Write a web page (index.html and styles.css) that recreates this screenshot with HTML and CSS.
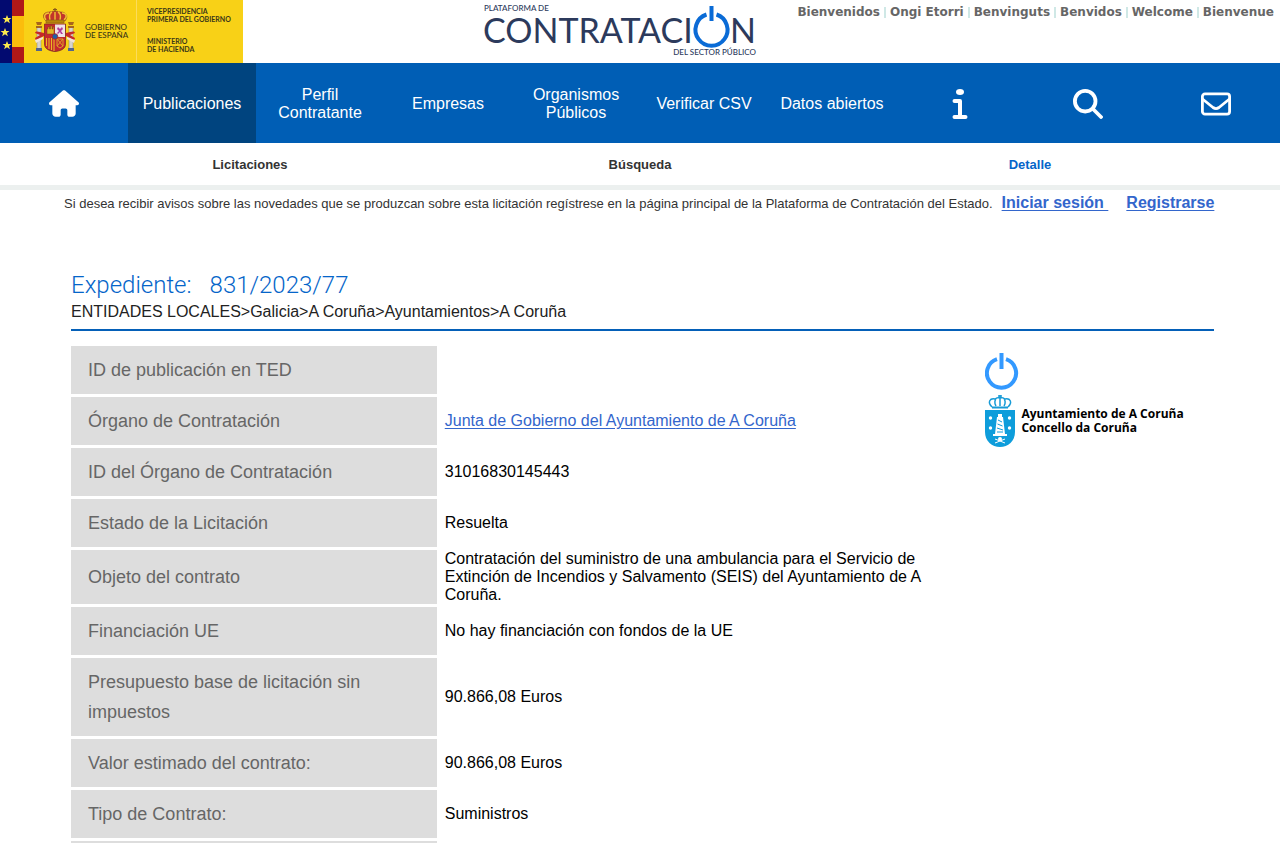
FILE: index.html
```html
<!DOCTYPE html>
<html lang="es">
<head>
<meta charset="utf-8">
<title>Plataforma de Contratación del Sector Público</title>
<link rel="stylesheet" href="styles.css">
</head>
<body>
<header class="top">
  <a class="gov" href="#" aria-label="Gobierno de España">
    <svg width="243" height="63" viewBox="0 0 243 63">
      <rect width="243" height="63" fill="#f8d117"/>
      <rect width="12" height="63" fill="#020a70"/>
      <rect x="12" width="12" height="63" fill="#b01818"/>
      <rect x="12" y="16" width="12" height="31" fill="#fbbd0c"/>
      <path d="M136.500 0v63" stroke="#fbdc5c"/>
      <g fill="#fbe94e">
        <path id="star" d="M7 15l1.200 3h3.300l-2.600 2 1 3.200L7 21.300l-2.900 1.900 1-3.200-2.600-2h3.300z"/>
        <use href="#star" x="-2" y="13"/>
        <use href="#star" y="26"/>
      </g>
      <g stroke="#8c5a1a" stroke-width=".6">
        <path d="M46 21c-5-5-2-9 3-9 2 0 3-1 6-1s4 1 6 1c5 0 8 4 4 9z" fill="#c2352b"/>
        <path d="M46 20c-3-4-1-7 3-7M50 20c-1-4 0-7 2-8M55 20v-8M60 20c1-4 0-7-2-8M64 20c4-4 2-7-2-7" fill="none" stroke="#f1c232" stroke-width="1.400"/>
        <path d="M46 20h18v3H46z" fill="#b8860b"/>
        <path d="M55 8v4M53 9.500h4" stroke-width="1.200"/>
      </g>
      <g id="pillar">
        <path d="M37 27h4v22h-4z" fill="#d8d4cc" stroke="#8a8580" stroke-width=".5"/>
        <path d="M36 22h6l-1 3h-4zM36 26h6v2h-6z" fill="#a8641c"/>
        <path d="M36 48h6v3h-6z" fill="#54658c"/>
        <path d="M35 33c1-3 4-1 9 0v3c-4 2-6 3-8 5l-1-3 5-3z" fill="#c62828"/>
        <path d="M35 40l8-3v2l-7 4z" fill="#f1e5d8"/>
      </g>
      <use href="#pillar" transform="translate(110 0) scale(-1 1)"/>
      <path d="M44.500 24h21v20c0 5-5 7-10.500 7.500-5.500-.5-10.500-2.500-10.500-7.500z" fill="#c5282f" stroke="#7b2a22" stroke-width=".8"/>
      <path d="M55 24.500h10V37H55z" fill="#efe3e6"/>
      <path d="M47 34v-5h1v-2h1.500v2h1v-3h1.500v3h1v-2h1v7z" fill="#e4b425" stroke="#7b4a14" stroke-width=".5"/>
      <path d="M58 27l2 2 2-2 1 2-2 2 2 3h-2l-1-2-2 2-1-1 2-2-2-2z" fill="#b0399a"/>
      <path d="M46.500 38v8M49 38v11M51.500 38v12M54 38v13" stroke="#e9b824" stroke-width="1.100"/>
      <path d="M57 39h6v7l-3 2-3-2zM57 39l6 7M63 39l-6 7" fill="none" stroke="#dda325"/>
      <circle cx="55" cy="36.500" r="2.800" fill="#1f5fa8" stroke="#b0281e" stroke-width=".8"/>
      <g class="gov-text">
        <text class="gov-name" x="85" y="30">GOBIERNO</text>
        <text class="gov-name" x="85" y="38">DE ESPAÑA</text>
        <text x="147" y="14">VICEPRESIDENCIA</text>
        <text x="147" y="22">PRIMERA DEL GOBIERNO</text>
        <text x="147" y="44">MINISTERIO</text>
        <text x="147" y="52">DE HACIENDA</text>
      </g>
    </svg>
  </a>
  <a class="brand" href="#" aria-label="Plataforma de Contratación del Sector Público">
    <svg width="274" height="60" viewBox="0 0 274 60">
      <g class="brand-text">
        <text class="brand-small" x="1" y="11">PLATAFORMA DE</text>
        <text class="brand-big" x="0" y="43">CONTRATACI</text>
        <text class="brand-big" x="247" y="43">N</text>
        <text class="brand-small" x="273" y="55" text-anchor="end">DEL SECTOR PÚBLICO</text>
      </g>
      <path d="M223.500 14.500a16 16 0 1 0 10 0M228.500 6v15" fill="none" stroke="#0a6bd6" stroke-width="4"/>
    </svg>
  </a>
  <ul class="langs">
    <li><a href="#">Bienvenidos</a></li>
    <li><a href="#">Ongi Etorri</a></li>
    <li><a href="#">Benvinguts</a></li>
    <li><a href="#">Benvidos</a></li>
    <li><a href="#">Welcome</a></li>
    <li><a href="#">Bienvenue</a></li>
  </ul>
</header>

<nav class="menu">
  <a href="#" aria-label="Inicio">
    <svg width="30" height="27" viewBox="0 0 576 512" fill="#fff"><path d="M575.800 255.500c0 18-15 32.100-32 32.100h-32l.7 160.200c.2 35.500-28.500 64.300-64 64.300H392c-22 0-40-18-40-40v-88c0-18-14-32-32-32h-64c-18 0-32 14-32 32v88c0 22-18 40-40 40h-56c-35 0-64-29-64-64V287.600H32c-18 0-32-14-32-32.100 0-9 3-17 10-24L266.400 8c7-7 15-8 22-8s15 2 21 7l255.400 224.500c8 7 12 15 11 24z"/></svg>
  </a>
  <a class="active" href="#">Publicaciones</a>
  <a href="#">Perfil Contratante</a>
  <a href="#">Empresas</a>
  <a href="#">Organismos Públicos</a>
  <a href="#">Verificar CSV</a>
  <a href="#">Datos abiertos</a>
  <a href="#" aria-label="Información">
    <svg width="16" height="30" viewBox="0 0 16 30"><ellipse cx="8" cy="3" rx="4" ry="3" fill="#fff"/><path d="M2.500 12h5.500v16M2.500 28h11" fill="none" stroke="#fff" stroke-width="4" stroke-linecap="round" stroke-linejoin="round"/></svg>
  </a>
  <a href="#" aria-label="Buscar">
    <svg width="30" height="30" viewBox="0 0 30 30" fill="none" stroke="#fff" stroke-width="3.800" stroke-linecap="round"><circle cx="12.200" cy="12.200" r="10.300"/><path d="M20 20l8 8"/></svg>
  </a>
  <a href="#" aria-label="Contacto">
    <svg width="30" height="24" viewBox="0 0 30 24" fill="none" stroke="#fff" stroke-width="2.800"><rect x="1.400" y="1.900" width="27.200" height="20.200" rx="2.600"/><path d="M1.500 7l10.500 8.500q3 2.200 6 0L28.500 7"/></svg>
  </a>
</nav>

<nav class="submenu">
  <a href="#">Licitaciones</a>
  <a href="#">Búsqueda</a>
  <a class="current" href="#">Detalle</a>
</nav>

<p class="notice">
  <span>Si desea recibir avisos sobre las novedades que se produzcan sobre esta licitación regístrese en la página principal de la Plataforma de Contratación del Estado.</span>
  <a class="login" href="#">Iniciar sesión&nbsp;</a>
  <a href="#">Registrarse</a>
</p>

<main class="main">
  <div class="heading">
    <h1><span>Expediente:</span><span>831/2023/77</span></h1>
    <p>ENTIDADES LOCALES&gt;Galicia&gt;A Coruña&gt;Ayuntamientos&gt;A Coruña</p>
  </div>
  <div class="detail">
    <table class="data">
      <tbody>
        <tr><th scope="row">ID de publicación en TED</th><td></td></tr>
        <tr><th scope="row">Órgano de Contratación</th><td><a href="#">Junta de Gobierno del Ayuntamiento de A Coruña</a></td></tr>
        <tr><th scope="row">ID del Órgano de Contratación</th><td>31016830145443</td></tr>
        <tr><th scope="row">Estado de la Licitación</th><td>Resuelta</td></tr>
        <tr><th scope="row">Objeto del contrato</th><td>Contratación del suministro de una ambulancia para el Servicio de Extinción de Incendios y Salvamento (SEIS) del Ayuntamiento de A Coruña.</td></tr>
        <tr><th scope="row">Financiación UE</th><td>No hay financiación con fondos de la UE</td></tr>
        <tr><th scope="row">Presupuesto base de licitación sin impuestos</th><td>90.866,08 Euros</td></tr>
        <tr><th scope="row">Valor estimado del contrato:</th><td>90.866,08 Euros</td></tr>
        <tr><th scope="row">Tipo de Contrato:</th><td>Suministros</td></tr>
        <tr><th scope="row">&nbsp;</th><td></td></tr>
      </tbody>
    </table>
    <aside class="logos">
      <svg width="34" height="38" viewBox="0 0 34 38" fill="none" stroke="#3399ff" stroke-width="4"><path d="M12 7.200a14.600 14.600 0 1 0 9 0M16.500 1v16"/></svg>
      <div class="council">
        <svg width="30" height="53" viewBox="0 0 30 53">
          <g fill="none" stroke="#179bd7" stroke-width="1.500">
            <path d="M7 13C2 8 5 4 10 5c2-2 8-2 10 0 5-1 8 3 3 8M11 12C9 9 10 6 11 5M19 12c2-3 1-6 0-7M15 12V1M13 2h4"/>
            <path d="M7 13.500h16" stroke-width="2"/>
          </g>
          <path d="M0 16h30v22c0 9-7 15-15 15S0 47 0 38z" fill="#0e9ddb"/>
          <g fill="#fff">
            <path d="M13 20h4v3h1l2 17h-10l2-17h1z"/>
            <path d="M8 40h14v2H8z"/>
            <g id="shells"><circle cx="5.500" cy="24" r="1.700"/><circle cx="5.500" cy="34" r="1.700"/></g>
            <use href="#shells" x="19"/>
            <circle cx="15" cy="45" r="2"/>
          </g>
          <path d="M13 26l4 2M12.500 30l5 2M12 34l6 2M12 38h6" stroke="#0e9ddb" stroke-width="1"/>
          <path d="M10 45l10 4M20 45l-10 4" stroke="#fff" stroke-width="1"/>
        </svg>
        <p>Ayuntamiento de A Coruña<br>Concello da Coruña</p>
      </div>
    </aside>
  </div>
</main>
</body>
</html>
```
FILE: styles.css
```css
* {
  box-sizing: border-box;
}

html {
  height: 100%;
  overflow: hidden;
}

body {
  margin: 0;
  height: 100%;
  overflow: hidden;
  font-family: "Liberation Sans", Arial, sans-serif;
  font-size: 16px;
  line-height: 18px;
  color: #000;
  background: #fff;
}

p,
h1,
ul {
  margin: 0;
  padding: 0;
}

svg {
  display: block;
}

.top {
  display: grid;
  grid-template-columns: 1fr auto 1fr;
  align-items: start;
}

.gov-text {
  font-family: Lato, sans-serif;
  font-size: 7px;
  font-weight: bold;
  fill: #3a3718;
}

.gov-name {
  font-size: 8px;
  font-weight: 500;
}

.brand {
  margin-right: 40px;
}

.brand-text {
  font-family: Lato, sans-serif;
  fill: #2c3a5c;
}

.brand-big {
  font-size: 34px;
}

.brand-small {
  font-size: 8px;
  font-weight: 500;
}

.langs {
  display: flex;
  justify-content: flex-end;
  padding: 4px 6px 0 0;
  list-style: none;
  font-family: "DejaVu Sans", sans-serif;
  font-size: 12px;
  font-weight: bold;
  line-height: 16px;
  white-space: nowrap;
}

.langs li {
  display: flex;
  align-items: center;
}

.langs li + li::before {
  content: "";
  width: 2px;
  height: 11px;
  margin: 0 4px;
  background: #cfe8e6;
}

.langs a {
  color: #666;
  text-decoration: none;
}

.menu {
  display: grid;
  grid-template-columns: repeat(10, 1fr);
  height: 80px;
  background: #005eb5;
}

.menu a {
  display: flex;
  align-items: center;
  justify-content: center;
  padding: 1px 12px 0;
  color: #fff;
  text-align: center;
  text-decoration: none;
}

.menu .active {
  background: #00447f;
}

.submenu {
  display: grid;
  grid-template-columns: repeat(3, 1fr);
  padding: 13px 55px 11px;
  border-bottom: 5px solid #ecf0ef;
  font-size: 13px;
  font-weight: bold;
  text-align: center;
}

.submenu a {
  color: #333;
  text-decoration: none;
}

.submenu .current {
  color: #0565c9;
}

.notice {
  display: flex;
  align-items: baseline;
  padding: 4px 64px 0;
  font-size: 13px;
  color: #333;
  white-space: nowrap;
}

.notice a {
  font-size: 16px;
  font-weight: bold;
  color: #3366cc;
  text-underline-offset: 2px;
}

.notice .login {
  margin: 0 18px 0 9px;
}

.main {
  padding: 56px 66px 0 71px;
}

.heading {
  padding-bottom: 8px;
  border-bottom: 2px solid #0560b8;
  color: #222;
}

.heading h1 {
  display: flex;
  gap: 18px;
  margin-bottom: 2px;
  font-family: Roboto, sans-serif;
  font-size: 24px;
  font-weight: 300;
  line-height: 32px;
  color: #0565c9;
}

.detail {
  display: grid;
  grid-template-columns: 4fr 1fr;
  padding-top: 12px;
}

.data {
  width: 100%;
  table-layout: fixed;
  border-collapse: separate;
  border-spacing: 0 3px;
}

.data th {
  width: 40%;
  padding: 9px 17px;
  background: #ddd;
  font-size: 18px;
  font-weight: normal;
  line-height: 30px;
  color: #666;
  text-align: left;
}

.data td {
  padding: 0 48px 0 8px;
}

.data a {
  color: #3366cc;
  text-underline-offset: 2px;
}

.logos {
  padding-top: 9px;
}

.council {
  display: flex;
  gap: 6px;
  padding-top: 4px;
}

.council p {
  padding-top: 13px;
  font-family: "Open Sans", sans-serif;
  font-size: 12px;
  font-weight: bold;
  line-height: 14px;
  white-space: nowrap;
}
```
